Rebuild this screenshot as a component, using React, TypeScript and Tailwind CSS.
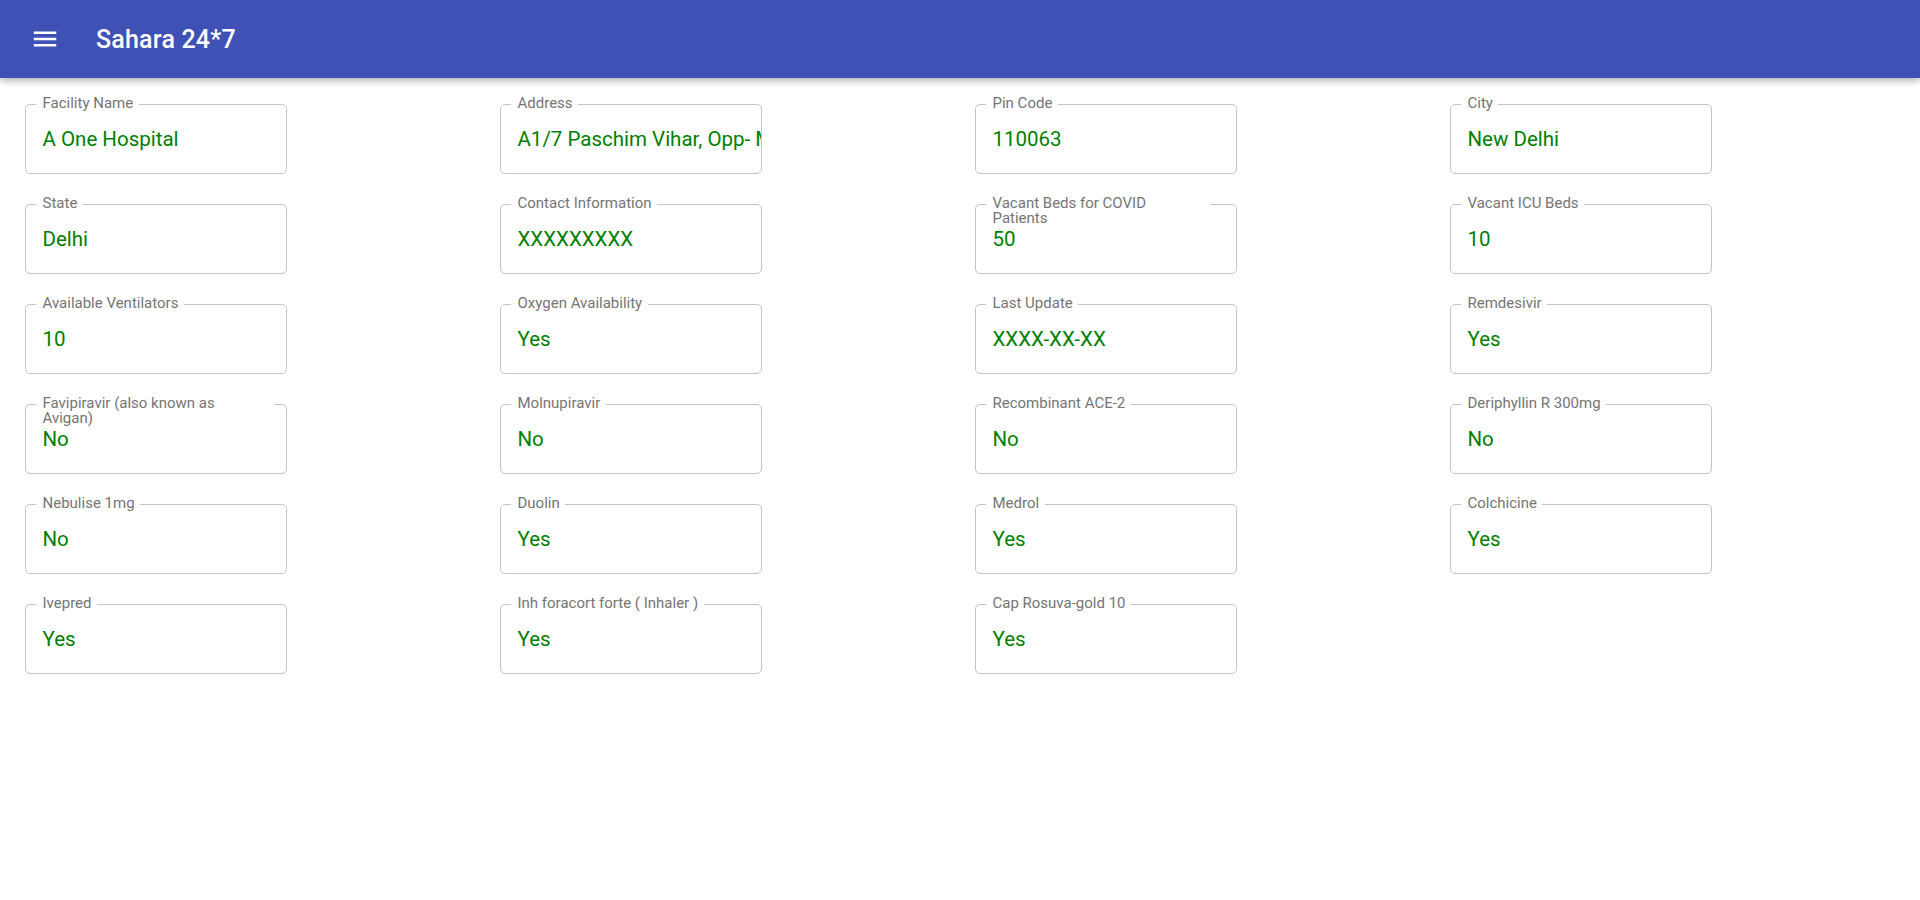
import React from "react";

type Field = { label: string; value: string };

const fields: Field[] = [
  { label: "Facility Name", value: "A One Hospital" },
  { label: "Address", value: "A1/7 Paschim Vihar, Opp- Metro Pillar No. 213" },
  { label: "Pin Code", value: "110063" },
  { label: "City", value: "New Delhi" },
  { label: "State", value: "Delhi" },
  { label: "Contact Information", value: "XXXXXXXXX" },
  { label: "Vacant Beds for COVID Patients", value: "50" },
  { label: "Vacant ICU Beds", value: "10" },
  { label: "Available Ventilators", value: "10" },
  { label: "Oxygen Availability", value: "Yes" },
  { label: "Last Update", value: "XXXX-XX-XX" },
  { label: "Remdesivir", value: "Yes" },
  { label: "Favipiravir (also known as Avigan)", value: "No" },
  { label: "Molnupiravir", value: "No" },
  { label: "Recombinant ACE-2", value: "No" },
  { label: "Deriphyllin R 300mg", value: "No" },
  { label: "Nebulise 1mg", value: "No" },
  { label: "Duolin", value: "Yes" },
  { label: "Medrol", value: "Yes" },
  { label: "Colchicine", value: "Yes" },
  { label: "Ivepred", value: "Yes" },
  { label: "Inh foracort forte ( Inhaler )", value: "Yes" },
  { label: "Cap Rosuva-gold 10", value: "Yes" },
];

function OutlinedField({ label, value }: Field) {
  return (
    <div className="relative h-[70px] w-[262px] rounded-[5px] border border-[#c4c4c4] bg-white">
      {/* notch in the border */}
      <span className="absolute left-[10px] top-[-9px] block max-w-[calc(100%-20px)] overflow-hidden whitespace-nowrap bg-white px-[6px] text-[15px] leading-[15px] text-transparent">
        {label}
      </span>
      {/* visible label */}
      <span className="absolute left-[16.5px] top-[-9px] block max-w-[205px] text-[15px] leading-[15px] text-[#757575]">
        {label}
      </span>
      <div className="flex h-full items-center overflow-hidden px-[16.5px]">
        <span className="block whitespace-nowrap text-[20.5px] leading-[23px] text-[#008000]">
          {value}
        </span>
      </div>
    </div>
  );
}

export default function App() {
  return (
    <div
      className="min-h-[900px] w-full bg-white"
      style={{ fontFamily: "Roboto, 'Liberation Sans', sans-serif" }}
    >
      <header className="relative z-10 flex h-[78px] items-center bg-[#3f51b5] pl-[30px] shadow-[0_3px_7px_rgba(0,0,0,0.3)]">
        <svg viewBox="0 0 24 24" className="h-[30px] w-[30px]" fill="#ffffff">
          <path d="M3 18h18v-2H3v2zm0-5h18v-2H3v2zm0-7v2h18V6H3z" />
        </svg>
        <h1 className="ml-[36px] text-[25px] font-medium leading-none tracking-[0.2px] text-white">
          Sahara 24*7
        </h1>
      </header>
      <main className="grid grid-cols-[repeat(4,475px)] gap-y-[30px] pl-[25px] pt-[26px]">
        {fields.map((f) => (
          <OutlinedField key={f.label} label={f.label} value={f.value} />
        ))}
      </main>
    </div>
  );
}
